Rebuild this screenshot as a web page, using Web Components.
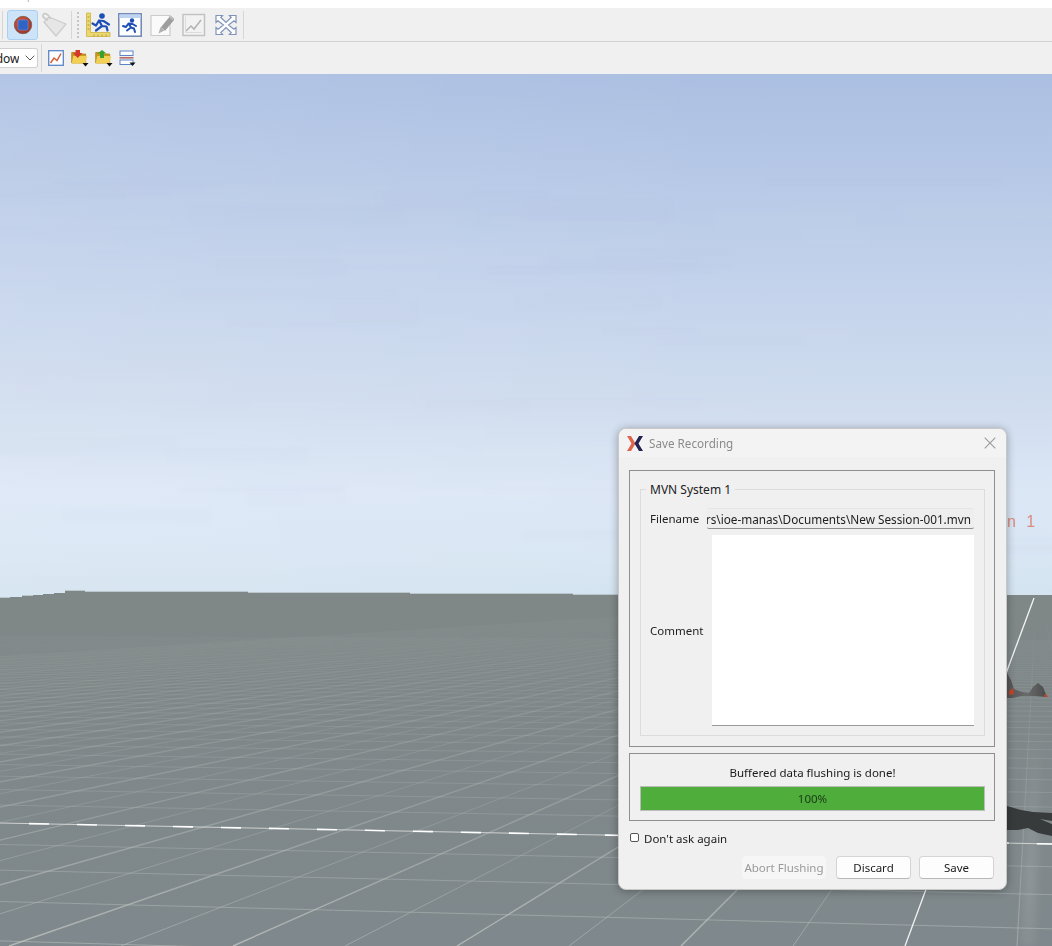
<!DOCTYPE html>
<html>
<head>
<meta charset="utf-8">
<title>Save Recording</title>
<style>
  html, body { margin: 0; height: 100%; overflow: hidden; background: #fff; }
  body { font: 11.5px "Noto Sans", "Open Sans", sans-serif; color: #1a1a1a; }
</style>
</head>
<body>
<app-shell>
  <app-toolbar slot="top" kind="main">
    <tool-sep></tool-sep>
    <tool-button active>
      <svg width="20" height="20" viewBox="0 0 20 20"><defs><radialGradient id="rec" cx=".4" cy=".35" r=".8"><stop offset="0" stop-color="#e0563c"/><stop offset="1" stop-color="#8e2f24"/></radialGradient></defs><circle cx="10" cy="10" r="8.7" fill="url(#rec)" stroke="#7c5a4a" stroke-width=".8"/><rect x="5" y="5" width="10" height="10" rx="1.5" fill="#2f63c4" stroke="#5c86d6" stroke-width=".8"/></svg>
    </tool-button>
    <tool-button>
      <svg width="26" height="26" viewBox="0 0 26 26"><path d="M8 5l17 7-10 12L3 10z" fill="#e6e6e6" stroke="#cbcbcb" stroke-width="1.200" stroke-linejoin="round"/><path d="M9.500 7C8 2 3 0 2 3c-.5 2 2 4 5 5" fill="none" stroke="#cacaca" stroke-width="1.800"/></svg>
    </tool-button>
    <tool-sep></tool-sep>
    <tool-grip></tool-grip>
    <tool-button>
      <svg width="26" height="26" viewBox="0 0 26 26"><path d="M1.500 1h4v19.500H25v4H1.500z" fill="#ecd873" stroke="#cdb23c" stroke-width=".8"/><path d="M2.500 5h2M2.500 9h2M2.500 13h2M2.500 17h2M9 22.500v2M13 22.500v2M17 22.500v2M21 22.500v2" stroke="#a58e2c" stroke-width=".8"/><circle cx="17" cy="4" r="2.800" fill="#1d4fb5"/><path d="M7.500 11.500l3.500 2 3-5 4.500.5 5.500 3.500M14 8.500l3 5.500-6 4.500M17 14l4.500.5 1 4" fill="none" stroke="#1d4fb5" stroke-width="2.200" stroke-linecap="round" stroke-linejoin="round"/></svg>
    </tool-button>
    <tool-button>
      <svg width="24" height="24" viewBox="0 0 24 24"><rect x=".8" y=".8" width="22.400" height="22.400" fill="#fff" stroke="#6f86b4" stroke-width="1.500"/><rect x="1.500" y="1.500" width="21" height="3.500" fill="#bcd4f0"/><circle cx="14" cy="7.500" r="2.200" fill="#1d4fb5"/><path d="M5 13l3 1 2.500-3.500 4 .5 3.500 2M10.500 10.500l2.500 4-4 3M13 14.500l3 1 1 3.500" fill="none" stroke="#1d4fb5" stroke-width="2" stroke-linecap="round" stroke-linejoin="round"/></svg>
    </tool-button>
    <tool-button>
      <svg width="24" height="24" viewBox="0 0 24 24"><path d="M1 2.500h19v20H1z" fill="#fafafa" stroke="#cbcbcb" stroke-width="1.200"/><path d="M22.500 4.500L13 16" stroke="#9d9d9d" stroke-width="5.500"/><path d="M10.500 14l4 3.500-6 3z" fill="#b0b0b0"/><path d="M20.500 2.500l3.500 3-1.500 1.800-3.500-3z" fill="#bdbdbd"/></svg>
    </tool-button>
    <tool-button>
      <svg width="24" height="24" viewBox="0 0 24 24"><rect x="1" y="1.500" width="21.500" height="21" fill="#f2f2f2" stroke="#c2c2c2" stroke-width="1.500"/><path d="M4 18l5-5 3 3 7-9" fill="none" stroke="#b2b2b2" stroke-width="1.500"/><path d="M3.500 3.500v16h16" fill="none" stroke="#dcdcdc"/></svg>
    </tool-button>
    <tool-button>
      <svg width="22" height="24" viewBox="0 0 22 24"><g fill="#fff" stroke="#7f93bb" stroke-width="1.200"><path d="M1 2.500h6.500L5.800 4.500l5.200 5 5.200-5-1.700-2H21v7l-2-1.800L13.500 12l5.500 4.300 2-1.800v7h-6.500l1.700-2-5.200-5-5.200 5 1.700 2H1v-7l2 1.800L8.500 12 3 7.700 1 9.500z"/></g></svg>
    </tool-button>
    <tool-sep></tool-sep>
  </app-toolbar>
  <app-toolbar slot="top" kind="sub">
    <tool-combo value="Window"></tool-combo>
    <tool-sep></tool-sep>
    <span class="i">
      <svg width="16" height="16" viewBox="0 0 16 16"><rect x=".7" y=".7" width="14.600" height="14.600" fill="#fff" stroke="#5a86c8" stroke-width="1.300"/><path d="M2.500 13l3.500-5 3 2.500 4-7" fill="none" stroke="#d2603c" stroke-width="1.500"/></svg>
    </span>
    <span class="i">
      <svg width="18" height="17" viewBox="0 0 18 17"><path d="M.7 2.500h5L7.200 4h7.500v9H.7z" fill="#c89a1c" stroke="#a8841e" stroke-width=".8"/><path d="M.7 13.500l1.500-7.500H16l-1.500 7.500z" fill="#f2cf55"/><path d="M4.500 0h4.500v3h2.500L6.700 8 2 3h2.500z" fill="#d8382a"/><path d="M11.500 13h6l-3 3.500z" fill="#111"/></svg>
    </span>
    <span class="i">
      <svg width="18" height="17" viewBox="0 0 18 17"><path d="M.7 2.500h5L7.200 4h7.500v9H.7z" fill="#c89a1c" stroke="#a8841e" stroke-width=".8"/><path d="M.7 13.500l1.500-7.500H16l-1.500 7.500z" fill="#f2cf55"/><path d="M5 8V3.500H2.500L7 0l4.500 3.500H9V8z" fill="#3aa02c"/><path d="M11.500 13h6l-3 3.500z" fill="#111"/></svg>
    </span>
    <span class="i">
      <svg width="18" height="17" viewBox="0 0 18 17"><rect x="1" y="1" width="13" height="4.500" fill="#fff" stroke="#5a86c8"/><path d="M.5 7.800h14" stroke="#b86a64" stroke-width="1.600"/><rect x="1" y="10" width="13" height="4.500" fill="#fff" stroke="#5a86c8"/><path d="M10.500 12.500h6l-3 3.500z" fill="#111"/></svg>
    </span>
  </app-toolbar>
  <scene-view>
    <save-dialog heading="Save Recording">
      <group-frame>
        <legend-box label="MVN System 1">
          <field-row label="Filename" kind="line">
            <text-line value="C:\Users\ioe-manas\Documents\New Session-001.mvn"></text-line>
          </field-row>
          <field-row label="Comment" kind="area">
            <text-area-box></text-area-box>
          </field-row>
        </legend-box>
      </group-frame>
      <group-frame compact>
        <flush-status message="Buffered data flushing is done!" percent="100"></flush-status>
      </group-frame>
      <check-line label="Don't ask again"></check-line>
      <div slot="actions" style="display:flex;gap:8px">
        <dialog-button disabled style="--w:84px;margin-right:2px">Abort Flushing</dialog-button>
        <dialog-button style="--w:75px">Discard</dialog-button>
        <dialog-button style="--w:75px">Save</dialog-button>
      </div>
    </save-dialog>
  </scene-view>
</app-shell>

<script>
const define = (name, css, html, setup) => {
    customElements.define(name, class extends HTMLElement {
        constructor() {
            super();
            const root = this.attachShadow({ mode: 'open' });
            root.innerHTML = `<style>${css}</style>${typeof html === 'function' ? html(this) : html}`;
        }
        connectedCallback() {
            if (setup) setup(this, this.shadowRoot);
        }
    });
};

define('app-shell', `
  :host { display: flex; flex-direction: column; width: 1052px; height: 946px; overflow: hidden; }
  .menu-end { height: 8px; background: #fff; overflow: hidden; color: #bbb; font-size: 12px; line-height: 16px; }
  .menu-end span { display: block; margin: -13px 0 0 8px; }
`, `<div class="menu-end"><span>Help</span></div><slot name="top"></slot><slot></slot>`);

define('app-toolbar', `
  :host { display: flex; align-items: center; background: #f0f0f0; box-sizing: border-box; }
  :host([kind=main]) { height: 34px; padding-left: 1px; border-bottom: 1px solid #d2d2d2; }
  :host([kind=sub]) { height: 32px; }
  ::slotted(.i) { display: inline-flex; margin-left: 6px; filter: blur(.35px); }
  ::slotted(.i:nth-of-type(1)) { margin-left: 3px; margin-right: 1px; }
  ::slotted(tool-button) { filter: blur(.35px); }
`, `<slot></slot>`);

define('tool-sep', `
  :host { display: block; width: 1px; height: 28px; background: #d6d6d6; margin: 0 3px 0 1px; }
`, ``);

define('tool-grip', `
  :host { display: block; width: 2px; height: 26px; margin: 0 3px 0 2px;
    background: repeating-linear-gradient(#c4c4c4 0 2px, transparent 2px 4px); }
`, ``);

define('tool-button', `
  :host { display: flex; align-items: center; justify-content: center; width: 32px; height: 30px; box-sizing: border-box;
    margin-top: 1px; border: 1px solid transparent; border-radius: 3px; }
  :host([active]) { width: 31px; background: #cde3f8; border-color: #a9d0f2; margin-left: 1px; }
`, `<slot></slot>`);

define('tool-combo', `
  :host { display: flex; align-items: center; width: 38px; height: 20px; box-sizing: border-box; background: #fff;
    border: 1px solid #d0d0d0; border-left: 0; border-radius: 0 3px 3px 0; margin-right: 2px; font-size: 12px; }
  .v { width: 19px; margin-right: 6px; overflow: hidden; white-space: nowrap; }
  .v span { display: block; margin-left: -26px; }
`, (el) => `<span class="v"><span>${el.getAttribute('value')}</span></span>
  <svg width="10" height="6" viewBox="0 0 10 6"><path d="M.7.7L5 5l4.300-4.300" fill="none" stroke="#555" stroke-width="1"/></svg>`);

const buildGrid = () => {
    const vpA = [1037, 590];
    const vpB = [-12000, 590];
    let soft = '';
    let strong = '';
    for (let k = -48; k <= 2; k++) {
        const x0 = 905 + 112 * k;
        if (k === 0) continue;
        const line = `<line x1="${x0}" y1="946" x2="${vpA[0]}" y2="${vpA[1]}"/>`;
        if (k % 2) soft += line; else strong += line;
    }
    for (let n = -5; n <= 48; n++) {
        const d = 1 / (0.00429 + 0.00036 * n);
        const yAt = (x) => vpB[1] + d * (x - vpB[0]) / -vpB[0];
        if (n !== 0) soft += `<line x1="0" y1="${yAt(0)}" x2="1052" y2="${yAt(1052)}"/>`;
    }
    return { soft, strong };
};

// faint blocky bands in the sky, seeded so every photograph is the same
const buildStreaks = () => {
    let seed = 17;
    const rnd = () => (seed = (seed * 16807) % 2147483647) / 2147483647;
    let out = '';
    for (let i = 0; i < 70; i++) {
        const y = 180 + rnd() * 370;
        const fill = rnd() > 0.5 ? '#fff' : '#a9bddf';
        out += `<rect x="${rnd() * 1000 - 80}" y="${y}" width="${60 + rnd() * 220}" height="${4 + rnd() * 18}" fill="${fill}" opacity=".022"/>`;
    }
    return out;
};

define('scene-view', `
  :host { display: block; position: relative; flex: 1; overflow: hidden; }
  svg { position: absolute; left: 0; top: 0; display: block; }
  .label { position: absolute; left: 1007px; top: 439px; font: 16px "Liberation Sans", sans-serif; letter-spacing: .5px;
    color: #d98b80; white-space: pre; filter: blur(.4px); }
`, () => {
    const { soft, strong } = buildGrid();
    return `<svg width="1052" height="872" viewBox="0 74 1052 872">
      <defs>
        <linearGradient id="sky" x1="0" y1="74" x2="0" y2="598" gradientUnits="userSpaceOnUse">
          <stop offset="0" stop-color="#abbfe2"/><stop offset=".43" stop-color="#c5d4ec"/>
          <stop offset=".62" stop-color="#cfdcee"/><stop offset=".8" stop-color="#dce7f6"/>
          <stop offset=".93" stop-color="#d8e6f3"/><stop offset="1" stop-color="#d3e3f0"/>
        </linearGradient>
        <linearGradient id="skyEdge" x1="0" y1="0" x2="1" y2="0">
          <stop offset="0" stop-color="#fff" stop-opacity=".1"/><stop offset=".7" stop-color="#fff" stop-opacity="0"/>
        </linearGradient>
        <linearGradient id="ground" x1="0" y1="592" x2="0" y2="946" gradientUnits="userSpaceOnUse">
          <stop offset="0" stop-color="#7f8787"/><stop offset="1" stop-color="#7f888c"/>
        </linearGradient>
        <linearGradient id="gridSoft" x1="0" y1="600" x2="0" y2="946" gradientUnits="userSpaceOnUse">
          <stop offset="0" stop-color="#a8b0ae" stop-opacity="0"/><stop offset=".15" stop-color="#a8b0ae" stop-opacity=".08"/>
          <stop offset=".3" stop-color="#a8b0ae" stop-opacity=".22"/>
          <stop offset=".6" stop-color="#a8b0ae" stop-opacity=".36"/><stop offset="1" stop-color="#b4baba" stop-opacity=".62"/>
        </linearGradient>
        <linearGradient id="gridStrong" x1="0" y1="600" x2="0" y2="946" gradientUnits="userSpaceOnUse">
          <stop offset="0" stop-color="#b0b6b2" stop-opacity="0"/><stop offset=".15" stop-color="#b0b6b2" stop-opacity=".1"/>
          <stop offset=".3" stop-color="#b0b6b2" stop-opacity=".26"/>
          <stop offset=".6" stop-color="#b0b6b2" stop-opacity=".44"/><stop offset="1" stop-color="#c0c4c0" stop-opacity=".8"/>
        </linearGradient>
        <linearGradient id="glow" x1="0" y1="720" x2="0" y2="880" gradientUnits="userSpaceOnUse" spreadMethod="reflect">
          <stop offset="0" stop-color="#fff" stop-opacity="0"/><stop offset="1" stop-color="#fff" stop-opacity=".12"/>
        </linearGradient>
        <linearGradient id="fig" x1="0" y1="0" x2="1" y2="0">
          <stop offset="0" stop-color="#555"/><stop offset=".5" stop-color="#6a6a6a"/><stop offset="1" stop-color="#4a4a4a"/>
        </linearGradient>
        <clipPath id="floor"><path d="M0 598H10V597H22V596H33V595H43V594H54V593H65V591H85V592H248V593H410V594H573V595H1052V946H0z"/></clipPath>
        <filter id="soft"><feGaussianBlur stdDeviation=".7"/></filter>
        <filter id="band"><feGaussianBlur stdDeviation="1.500"/></filter>
        <filter id="lines" x="0" y="0" width="1" height="1"><feGaussianBlur stdDeviation=".35"/></filter>
        <filter id="glowBlur" x="-2" y="0" width="5" height="1"><feGaussianBlur stdDeviation="4"/></filter>
      </defs>
      <rect x="0" y="74" width="1052" height="872" fill="url(#sky)"/>
      <rect x="0" y="74" width="1052" height="524" fill="url(#skyEdge)"/>
      <g filter="url(#band)">${buildStreaks()}</g>
      <g clip-path="url(#floor)">
        <rect x="0" y="590" width="1052" height="356" fill="url(#ground)"/>
        <g filter="url(#lines)">
          <g stroke="url(#gridSoft)" stroke-width="1" fill="none">${soft}</g>
          <g stroke="url(#gridStrong)" stroke-width="1.400" fill="none">${strong}</g>
        </g>
        <path d="M1028 720h14l-8 226h-12z" fill="url(#glow)" filter="url(#glowBlur)"/>
        <line x1="0" y1="823" x2="1052" y2="844" stroke="#cfd2d0" stroke-width="1"/>
        <line x1="29" y1="823.600" x2="1052" y2="844" stroke="#fff" stroke-width="1.600" stroke-dasharray="20 28"/>
        <line x1="905" y1="946" x2="1034" y2="598" stroke="#f4f4f4" stroke-width="1.300"/>
        <g filter="url(#soft)">
          <path d="M1007 673l4 7 3 9 8 3 7 1 4-6 5-4 5 4 4 10-12-1-14 0-8 2-6 0z" fill="url(#fig)"/>
          <path d="M1009 691l4-3 1 6-5 1zM1044 695l2-1 2 3h-3z" fill="#c2452c"/>
          <path d="M1007 806l14 4 12 2 19 1v8l-12-2 12 5v12l-14-3-10-5-10 2-11 0z" fill="#393b3b"/>
        </g>
      </g>
      <path d="M0 597.500H10M22 595.500H33M65 590.500H85M85 591.500H248M248 592.500H410M410 593.500H573M573 594.500H618" stroke="#aab2b6" stroke-width="1" opacity=".6"/>
    </svg><div class="label">n  1</div><slot></slot>`;
});

define('save-dialog', `
  :host { position: absolute; left: 618px; top: 354px; width: 389px; height: 462px; box-sizing: border-box; display: flex; flex-direction: column;
    background: #f0f0f0; border-radius: 8px; border: 1px solid #c8c8c8; box-shadow: 0 1px 9px rgba(0,0,0,.32); overflow: hidden; filter: blur(.25px); }
  header { display: flex; align-items: center; height: 28px; flex: none; padding: 0 10px 0 8px; background: #f3f3f3; color: #8b8b8b; font-size: 11.7px; }
  header svg.logo { margin-right: 6px; }
  header span { flex: 1; }
  main { display: flex; flex-direction: column; gap: 6px; padding: 13px 11px 0 10px; }
  footer { display: flex; justify-content: flex-end; padding: 0 12px 0 0; margin-top: 7px; }
`, (el) => `<header>
    <svg class="logo" width="16" height="15" viewBox="0 0 16 15"><path d="M0 0h4l4.500 7.500L4 15H0l4.500-7.500z" fill="#e0654c"/><path d="M16 0h-4L7.500 7.500 12 15h4l-4.500-7.500z" fill="#232352"/></svg>
    <span>${el.getAttribute('heading')}</span>
    <svg width="12" height="12" viewBox="0 0 12 12"><path d="M.7.7l10.600 10.600M11.300.7L.7 11.300" stroke="#999" stroke-width="1.100" fill="none"/></svg>
  </header><main><slot></slot></main><footer><slot name="actions"></slot></footer>`);

define('group-frame', `
  :host { display: block; box-sizing: border-box; height: 277px; padding: 10px 9px 10px 10px; border: 1px solid #8f8f8f; }
  :host([compact]) { height: 68px; padding: 10px 9px 10px 10px; }
`, `<slot></slot>`);

define('legend-box', `
  :host { display: block; position: relative; box-sizing: border-box; height: 247px; padding: 18px 10px 9px 9px; margin-top: 8px; border: 1px solid #dcdcdc; }
  .t { position: absolute; left: 5px; top: -9px; padding: 0 4px; background: #f0f0f0; color: #222; line-height: 18px; font-size: 12px; }
  .rows { display: flex; flex-direction: column; gap: 6px; }
`, (el) => `<span class="t">${el.getAttribute('label')}</span><div class="rows"><slot></slot></div>`);

define('field-row', `
  :host { display: flex; align-items: center; color: #222; }
  .l { flex: none; width: 57px; white-space: nowrap; }
  :host([kind=area]) .l { width: 62px; }
  .f { flex: 1; min-width: 0; }
`, (el) => `<span class="l">${el.getAttribute('label')}</span><div class="f"><slot></slot></div>`);

define('text-line', `
  :host { display: flex; justify-content: flex-end; height: 21px; box-sizing: border-box; overflow: hidden; white-space: nowrap; padding-right: 3px;
    background: #eeeeee; border-bottom: 1px solid #8e8e8e; border-top: 1px solid #e6e6e6; line-height: 20px; color: #222; border-radius: 2px; font-size: 11.75px; }
`, (el) => `<span>${el.getAttribute('value')}</span>`);

define('text-area-box', `
  :host { display: block; height: 191px; box-sizing: border-box; background: #fff; border-bottom: 1px solid #999; }
`, ``);

define('flush-status', `
  :host { display: block; text-align: center; color: #1a1a1a; }
  .m { height: 22px; line-height: 18px; }
  .bar { height: 25px; box-sizing: border-box; background: #4fad3c; border: 1px solid #bcbcbc; line-height: 23px; color: #1c3a16; }
`, (el) => `<div class="m">${el.getAttribute('message')}</div><div class="bar">${el.getAttribute('percent')}%</div>`);

define('check-line', `
  :host { display: flex; align-items: center; gap: 5px; margin-top: 0; margin-left: 1px; height: 22px; color: #1a1a1a; }
  i { display: block; width: 7px; height: 7px; border: 1px solid #555; border-radius: 2px; background: #fff; margin-top: -2px; }
`, (el) => `<i></i><span>${el.getAttribute('label')}</span>`);

define('dialog-button', `
  :host { display: inline-flex; align-items: center; justify-content: center; width: var(--w); height: 23px; box-sizing: border-box; white-space: nowrap; line-height: 20px;
    background: #fdfdfd; border: 1px solid #d4d4d4; border-bottom-color: #b8b8b8; border-radius: 4px; color: #1a1a1a; }
  :host([disabled]) { background: #f6f6f6; border-color: #f6f6f6; color: #999; }
`, `<slot></slot>`);
</script>
</body>
</html>
